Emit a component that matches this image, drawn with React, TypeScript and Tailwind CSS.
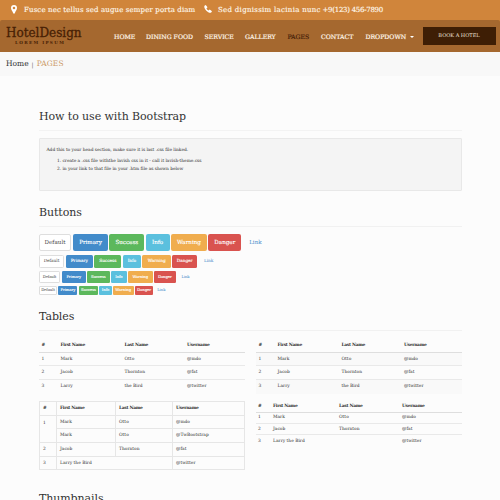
import React from "react";

const nav = [
  { label: "HOME", cls: "w-[32px]" },
  { label: "DINING FOOD", cls: "w-[58.5px]" },
  { label: "SERVICE", cls: "w-[40.5px]" },
  { label: "GALLERY", cls: "w-[42.5px]" },
  { label: "PAGES", cls: "w-[33.5px] text-[#45210a]" },
  { label: "CONTACT", cls: "w-[44.5px]" },
  { label: "DROPDOWN", cls: "w-[44px]" },
];

const names = ["Default", "Primary", "Success", "Info", "Warning", "Danger"];
const colors = [
  "bg-white text-[#444] border border-[#dedede]",
  "bg-[#428bca] text-white",
  "bg-[#5cb85c] text-white",
  "bg-[#5bc0de] text-white",
  "bg-[#f0ad4e] text-white",
  "bg-[#d9534f] text-white",
];

const buttonRows = [
  {
    row: "h-[17px] gap-[1.3px] text-[5.6px]",
    widths: ["w-[32px] mr-[0.7px]", "w-[35px]", "w-[35px]", "w-[24px]", "w-[36.3px]", "w-[32.7px]"],
    radius: "rounded-[2px]",
    link: "ml-[6.7px]",
  },
  {
    row: "h-[13px] mt-[4px] gap-[1.2px] text-[4.3px] tracking-[-0.05px]",
    widths: ["w-[25px] mr-[0.5px]", "w-[27.3px]", "w-[27.3px]", "w-[18.6px]", "w-[28.4px]", "w-[25.4px]"],
    radius: "rounded-[1.5px]",
    link: "ml-[5.4px]",
  },
  {
    row: "h-[12px] mt-[3px] gap-[1px] text-[3.8px] tracking-[-0.1px]",
    widths: ["w-[21px] mr-[1px]", "w-[23.5px]", "w-[23.5px]", "w-[15.9px]", "w-[24.8px]", "w-[22.3px]"],
    radius: "rounded-[1.2px]",
    link: "ml-[4.5px]",
  },
  {
    row: "h-[8.5px] mt-[3px] gap-[1.3px] text-[3.8px] tracking-[-0.06px]",
    widths: ["w-[18px]", "w-[19.2px]", "w-[19.4px]", "w-[12.2px]", "w-[20.6px]", "w-[18.4px]"],
    radius: "rounded-[1px]",
    link: "ml-[2.6px]",
  },
];

const people = [
  ["1", "Mark", "Otto", "@mdo"],
  ["2", "Jacob", "Thornton", "@fat"],
  ["3", "Larry", "the Bird", "@twitter"],
];
const head = ["#", "First Name", "Last Name", "Username"];

function Heading({ children }: { children: React.ReactNode }) {
  return <h2 className="h-[20px] whitespace-nowrap text-[11px] leading-[22px] tracking-[-0.08px] text-[#333]">{children}</h2>;
}

function PlainTable({ striped = false }: { striped?: boolean }) {
  return (
    <div className="w-[206px]">
      <div className="grid h-[14px] grid-cols-[19px_64px_62.5px_1fr] items-center border-b border-[#dedede] pl-[2.5px] font-bold tracking-[-0.3px]">
        {head.map((h) => <span key={h}>{h}</span>)}
      </div>
      {people.map((p, i) => (
        <div
          key={p[0]}
          className={`grid h-[13.7px] grid-cols-[19px_64px_62.5px_1fr] items-center pl-[2.5px] ${i < 2 ? "border-b border-[#e9e9e9]" : ""} ${striped && i !== 1 ? "bg-[#f9f9f9]" : ""}`}
        >
          {p.map((c) => <span key={c}>{c}</span>)}
        </div>
      ))}
    </div>
  );
}

export default function App() {
  const td = "border border-[#e6e6e6] pl-[3px] align-middle";
  return (
    <div className="h-[500px] w-[500px] overflow-hidden bg-[#fcfcfc] font-['DejaVu_Serif',serif] text-[#333]">
      <header className="bg-[#d0853b]">
        <div className="flex h-[20px] items-center whitespace-nowrap pl-[11px] text-[7px] text-[#fff7ea] [-webkit-text-stroke:0.15px]">
          <svg viewBox="0 0 12 18" className="mt-[-2px] h-[9px] w-[6px]" fill="white">
            <path fillRule="evenodd" d="M6 0a6 6 0 0 0-6 6c0 3 3 6 4.5 11h3C9 12 12 9 12 6a6 6 0 0 0-6-6Zm0 3.3a2.6 2.6 0 1 1 0 5.2 2.6 2.6 0 0 1 0-5.2Z" />
          </svg>
          <span className="ml-[7px] w-[180px] tracking-[0.13px]">Fusce nec tellus sed augue semper porta diam</span>
          <svg viewBox="0 0 16 16" className="mt-[-2px] h-[8px] w-[8px]" fill="white">
            <path d="M1 1.5 3.5 0 7 4.5 4.8 6.8c1 1.9 2.4 3.3 4.3 4.3L11.4 9l4.6 3.3-1.6 2.8C9.5 18-1.8 7.3 1 1.5Z" />
          </svg>
          <span className="ml-[6px] w-[104.5px] tracking-[0.3px]">Sed dignissim lacinia nunc</span>
          <span className="tracking-[-0.28px]">+9(123) 456-7890</span>
        </div>
        <div className="flex h-[32px] items-center whitespace-nowrap rounded-t-[2px] bg-[#a5682f]">
          <div className="ml-[6px] w-[108px] text-[#482105]">
            <div className="text-[12px] leading-[14px] tracking-[0px] [-webkit-text-stroke:0.3px]">HotelDesign</div>
            <div className="ml-[9px] text-[4.2px] font-bold leading-[6px] tracking-[1.3px]">LOREM IPSUM</div>
          </div>
          <nav className="flex pt-[1px] text-[6.2px] tracking-[0px] text-[#fff5e8] [-webkit-text-stroke:0.2px]">
            {nav.map((n) => <span key={n.label} className={n.cls}>{n.label}</span>)}
          </nav>
          <span className="mt-[2px] h-0 w-0 border-x-[2px] border-t-[2px] border-x-transparent border-t-white" />
          <button className="ml-[9px] h-[18px] w-[73px] bg-[#3e1e05] text-[5px] text-[#eee2d5]">BOOK A HOTEL</button>
        </div>
      </header>
      <div className="flex h-[24px] items-center gap-[3px] bg-[#f8f8f8] pl-[6px] text-[7.5px]">
        <span>Home</span>
        <span className="text-[6px] text-[#666]">|</span>
        <span className="tracking-[0.15px] text-[#cc9b67]">PAGES</span>
      </div>

      <main className="ml-[39px] w-[423px] pt-[30px] text-[4.4px]">
        <Heading>How to use with Bootstrap</Heading>
        <div className="mt-[4px] h-px bg-[#f3f3f3]" />
        <section className="mt-[7px] h-[53px] whitespace-nowrap rounded-[1px] border border-[#e8e8e8] bg-[#f4f4f4] pl-[6.5px] pt-[7px] leading-[7.4px] tracking-[-0.05px]">
          <p>Add this to your head section, make sure it is last .css file linked.</p>
          <ol className="mt-[4px] pl-[10.5px]">
            <li>1. create a .css file withthe lavish css in it - call it lavish-theme.css</li>
            <li>2. in your link to that file in your .htm file as shown below</li>
          </ol>
        </section>

        <div className="pt-[11px]"><Heading>Buttons</Heading></div>
        <div className="mt-[4px] h-px bg-[#f1f1f1]" />
        <section className="pt-[7px]">
          {buttonRows.map((r, i) => (
            <div key={i} className={`flex ${r.row}`}>
              {names.map((n, j) => (
                <button key={n} className={`flex items-center justify-center ${j > 0 ? "[-webkit-text-stroke:0.12px]" : ""} ${colors[j]} ${r.widths[j]} ${r.radius}`}>{n}</button>
              ))}
              <a className={`self-center text-[#428bca] ${r.link}`}>Link</a>
            </div>
          ))}
        </section>

        <div className="pt-[11px]"><Heading>Tables</Heading></div>
        <div className="mt-[4px] h-px bg-[#f1f1f1]" />
        <section className="flex gap-[11px] pt-[8px]">
          <PlainTable />
          <PlainTable striped />
        </section>
        <section className="mt-[7px] flex items-start gap-[11px] whitespace-nowrap">
          <table className="w-[206px] table-fixed border-collapse">
            <colgroup>
              <col className="w-[17px]" /><col className="w-[59px]" /><col className="w-[57px]" /><col />
            </colgroup>
            <tbody>
              <tr className="h-[14px] border-b border-[#d9d9d9] text-left tracking-[-0.3px]">
                {head.map((h) => <th key={h} className={td}>{h}</th>)}
              </tr>
              <tr className="h-[13.7px]">
                <td rowSpan={2} className="border border-[#e6e6e6] pl-[3px] pt-[4px] align-top">1</td>
                <td className={td}>Mark</td><td className={td}>Otto</td><td className={td}>@mdo</td>
              </tr>
              <tr className="h-[13.7px]">
                <td className={td}>Mark</td><td className={td}>Otto</td><td className={td}>@TwBootstrap</td>
              </tr>
              <tr className="h-[13.7px]">
                <td className={td}>2</td><td className={td}>Jacob</td><td className={td}>Thornton</td><td className={td}>@fat</td>
              </tr>
              <tr className="h-[13.7px]">
                <td className={td}>3</td><td colSpan={2} className={td}>Larry the Bird</td><td className={td}>@twitter</td>
              </tr>
            </tbody>
          </table>
          <div className="w-[206px]">
            <div className="grid h-[12px] grid-cols-[15px_66px_63px_1fr] items-center border-b border-[#dedede] pl-[2px] font-bold tracking-[-0.3px]">
              {head.map((h) => <span key={h}>{h}</span>)}
            </div>
            {[people[0], people[1], ["3", "Larry the Bird", "", "@twitter"]].map((p, i) => (
              <div key={p[0]} className={`grid h-[11.4px] grid-cols-[15px_66px_63px_1fr] items-center pl-[2px] ${i < 2 ? "border-b border-[#e9e9e9]" : ""}`}>
                {p.map((c, j) => <span key={j}>{c}</span>)}
              </div>
            ))}
          </div>
        </section>
        <div className="pt-[18px]"><Heading>Thumbnails</Heading></div>
      </main>
    </div>
  );
}
